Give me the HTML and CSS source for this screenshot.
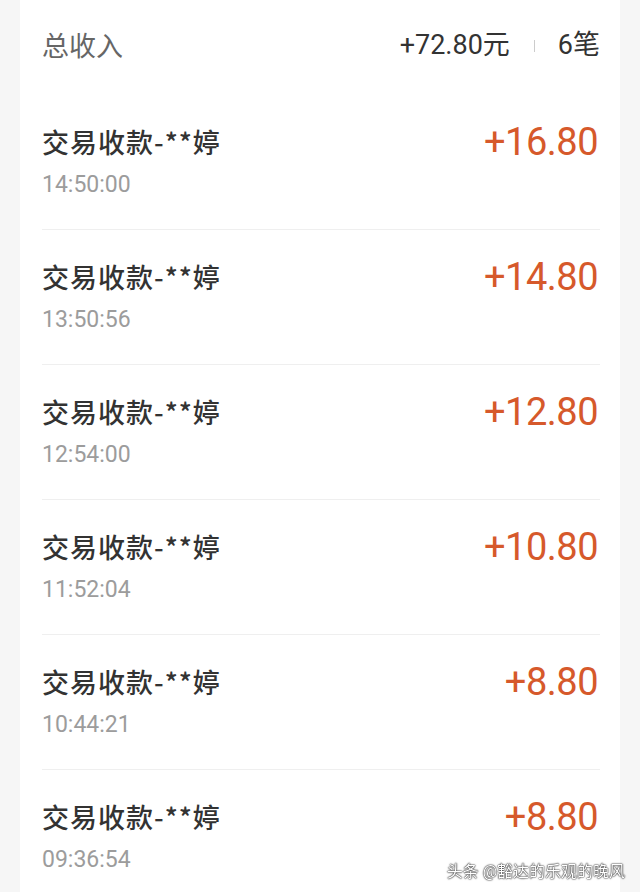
FILE: index.html
```html
<!DOCTYPE html>
<html lang="zh-CN">
<head>
  <meta charset="UTF-8" />
  <title>收款记录</title>
  <link rel="stylesheet" href="styles.css">
</head>
<body>

  <div class="card">
    <div class="summary">
      <span class="summary-label">总收入</span>
      <span class="summary-total">+72.80元</span>
      <span class="summary-sep"></span>
      <span class="summary-count">6笔</span>
    </div>

    <div class="row">
      <div class="info">
        <div class="title">交易收款-**婷</div>
        <div class="time">14:50:00</div>
      </div>
      <div class="amount">+16.80</div>
    </div>

    <div class="row">
      <div class="info">
        <div class="title">交易收款-**婷</div>
        <div class="time">13:50:56</div>
      </div>
      <div class="amount">+14.80</div>
    </div>

    <div class="row">
      <div class="info">
        <div class="title">交易收款-**婷</div>
        <div class="time">12:54:00</div>
      </div>
      <div class="amount">+12.80</div>
    </div>

    <div class="row">
      <div class="info">
        <div class="title">交易收款-**婷</div>
        <div class="time">11:52:04</div>
      </div>
      <div class="amount">+10.80</div>
    </div>

    <div class="row">
      <div class="info">
        <div class="title">交易收款-**婷</div>
        <div class="time">10:44:21</div>
      </div>
      <div class="amount">+8.80</div>
    </div>

    <div class="row">
      <div class="info">
        <div class="title">交易收款-**婷</div>
        <div class="time">09:36:54</div>
      </div>
      <div class="amount">+8.80</div>
    </div>
  </div>

  <div class="watermark">头条 @豁达的乐观的晚风</div>

</body>
</html>
```

FILE: styles.css
```css
body {
  margin: 0;
  background: #f6f6f6;
  font-family: Roboto, "Noto Sans CJK SC", sans-serif;
  overflow: hidden;
  height: 892px;
}

.card {
  margin: 0 20px;
  padding: 0 20px 0 22px;
  background: #fff;
  min-height: 892px;
}

.summary {
  display: flex;
  align-items: flex-start;
  height: 95px;
  padding-top: 30px;
  box-sizing: border-box;
  line-height: 30px;
  font-size: 27px;
}

.summary-label {
  flex: 1;
  color: #666;
  font-family: "Noto Sans CJK SC", sans-serif;
}

.summary-total {
  color: #333;
}

.summary-sep {
  width: 1px;
  height: 12px;
  margin: 10px 23px 0 24px;
  background: #ccc;
}

.summary-count {
  color: #333;
}

.row {
  display: flex;
  align-items: flex-start;
  height: 135px;
  padding-top: 29px;
  box-sizing: border-box;
  border-bottom: 1px solid #efefef;
}

.info {
  flex: 1;
}

.title {
  font-family: "Noto Sans CJK SC", sans-serif;
  font-size: 27px;
  font-weight: 500;
  letter-spacing: 1px;
  line-height: 36px;
  color: #333;
}

.time {
  margin-top: 10px;
  font-size: 23px;
  line-height: 30px;
  color: #9c9c9c;
}

.amount {
  margin-right: 2px;
  font-size: 38px;
  line-height: 36px;
  letter-spacing: -0.5px;
  color: #d6592b;
}

.watermark {
  position: fixed;
  right: 15px;
  bottom: 10px;
  font-size: 16px;
  color: #fff;
  text-shadow: 0 0 2px #000, 0 0 1px #000;
}
```
